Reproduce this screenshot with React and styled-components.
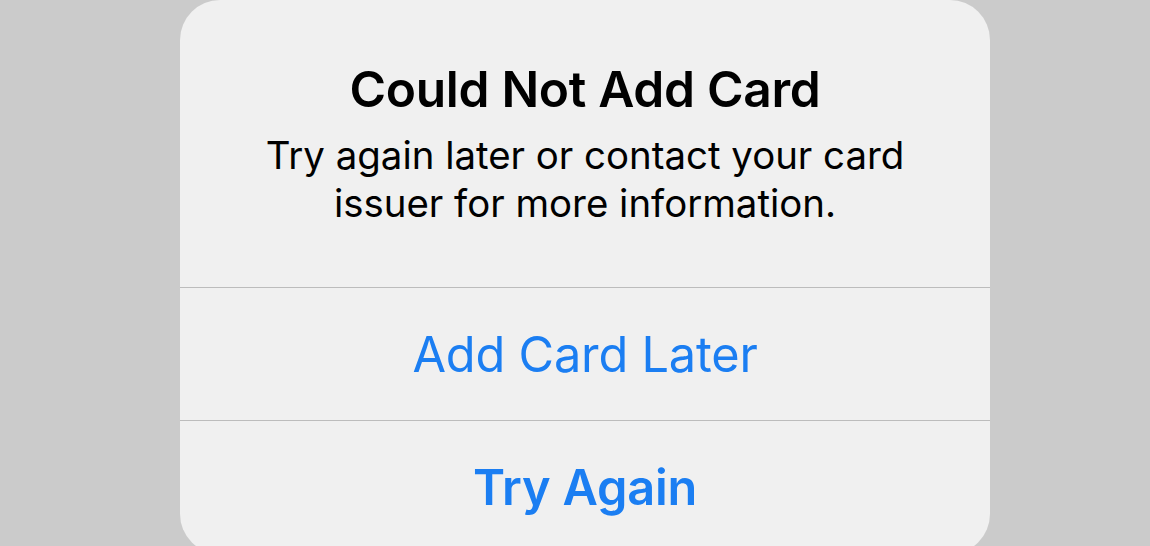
import React from "react";
import styled, { createGlobalStyle } from "styled-components";

const Global = createGlobalStyle`
  html, body {
    margin: 0;
    padding: 0;
    background: #cbcbcb;
  }
  body {
    font-family: Inter, "Noto Sans", "Liberation Sans", sans-serif;
    -webkit-font-smoothing: antialiased;
  }
`;

const Screen = styled.div`
  width: 1150px;
  height: 546px;
  overflow: hidden;
  background: #cbcbcb;
  display: flex;
  justify-content: flex-start;
  padding-left: 180px;
  box-sizing: border-box;
`;

const Alert = styled.div`
  width: 810px;
  height: 554px;
  flex-shrink: 0;
  background: #f0f0f0;
  border-radius: 40px;
  display: flex;
  flex-direction: column;
  overflow: hidden;
`;

const Header = styled.div`
  height: 287px;
  box-sizing: border-box;
  padding: 59px 40px 0;
  display: flex;
  flex-direction: column;
  align-items: center;
  text-align: center;
`;

const Title = styled.h2`
  margin: 0;
  font-size: 49.7px;
  line-height: 60px;
  font-weight: 600;
  color: #000;
  letter-spacing: -0.3px;
`;

const Message = styled.p`
  margin: 12px 0 0;
  font-size: 38.4px;
  line-height: 48px;
  font-weight: 400;
  color: #000;
`;

const Action = styled.button`
  all: unset;
  height: 132px;
  border-top: 1px solid #bcbcbc;
  display: flex;
  align-items: center;
  justify-content: center;
  font-family: Inter, "Noto Sans", "Liberation Sans", sans-serif;
  font-size: 48.7px;
  font-weight: ${(p) => (p.$primary ? 600 : 400)};
  color: #1b7ef2;
  letter-spacing: -0.2px;
`;

const App = () => {
  return (
    <Screen>
      <Global />
      <Alert>
        <Header>
          <Title>Could Not Add Card</Title>
          <Message>
            Try again later or contact your card
            <br />
            issuer for more information.
          </Message>
        </Header>
        <Action>Add Card Later</Action>
        <Action $primary>Try Again</Action>
      </Alert>
    </Screen>
  );
};

export default App;
